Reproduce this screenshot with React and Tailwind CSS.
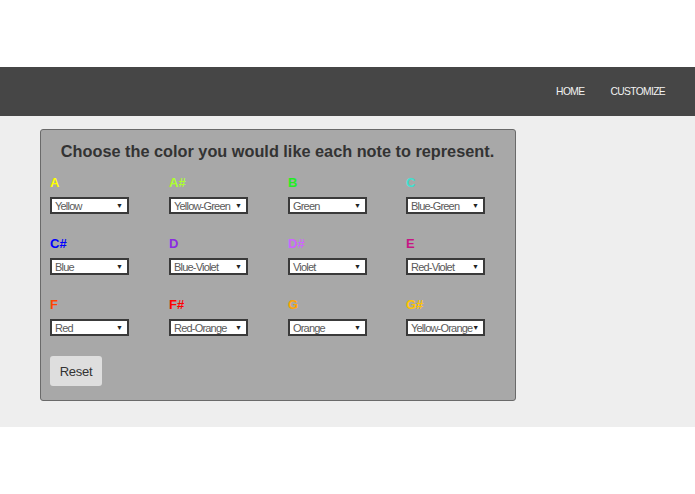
import React from 'react';

const notes = [
  { note: 'A', color: 'text-[#ffff00]', value: 'Yellow' },
  { note: 'A#', color: 'text-[#adff2f]', value: 'Yellow-Green' },
  { note: 'B', color: 'text-[#22ee22]', value: 'Green' },
  { note: 'C', color: 'text-[#40e0d0]', value: 'Blue-Green' },
  { note: 'C#', color: 'text-[#0000ff]', value: 'Blue' },
  { note: 'D', color: 'text-[#8a2be2]', value: 'Blue-Violet' },
  { note: 'D#', color: 'text-[#cc66ff]', value: 'Violet' },
  { note: 'E', color: 'text-[#c71585]', value: 'Red-Violet' },
  { note: 'F', color: 'text-[#ff4500]', value: 'Red' },
  { note: 'F#', color: 'text-[#ff0000]', value: 'Red-Orange' },
  { note: 'G', color: 'text-[#ffa500]', value: 'Orange' },
  { note: 'G#', color: 'text-[#ffc400]', value: 'Yellow-Orange' },
];

const FakeSelect = ({ value }) => (
  <div className="flex h-[17px] w-[79px] items-center justify-between border-2 border-[#3a3a3a] bg-white pl-[3px] pr-[4px] text-[11px] text-[#5a5a5a]">
    <span className="whitespace-nowrap tracking-[-0.8px]">{value}</span>
    <span className="text-[7px] text-[#222]">▼</span>
  </div>
);

export default function App() {
  return (
    <div className="min-h-[494px] bg-white font-['Liberation_Sans',Arial,sans-serif]">
      <div className="h-[67px]" />
      <header className="flex h-[49px] items-center justify-end bg-[#464646] pr-[30px]">
        <nav className="flex gap-[26px] text-[10.3px] tracking-[-0.65px] text-[#f2f2f2]">
          <a>HOME</a>
          <a>CUSTOMIZE</a>
        </nav>
      </header>
      <main className="h-[311px] bg-[#eeeeee] pl-[40px] pt-[13px]">
        <div className="w-[476px] rounded-[3px] border border-[#6a6a6a] bg-[#a8a8a8] pb-[14px] pl-[9px] pr-[10px] pt-[9px]">
          <h1 className="text-center text-[16.3px] font-bold text-[#333]">
            Choose the color you would like each note to represent.
          </h1>
          <div className="mt-[12px] grid grid-cols-[119px_119px_118px_1fr] gap-y-[22px]">
            {notes.map((n) => (
              <div key={n.note} className="flex flex-col">
                <span className={`text-[13px] font-bold leading-[16px] ${n.color}`}>{n.note}</span>
                <div className="mt-[6px]">
                  <FakeSelect value={n.value} />
                </div>
              </div>
            ))}
          </div>
          <button className="mt-[20px] h-[30px] w-[52px] rounded-[3px] bg-[#dedede] text-[13px] tracking-[-0.3px] text-[#333]">
            Reset
          </button>
        </div>
      </main>
    </div>
  );
}
